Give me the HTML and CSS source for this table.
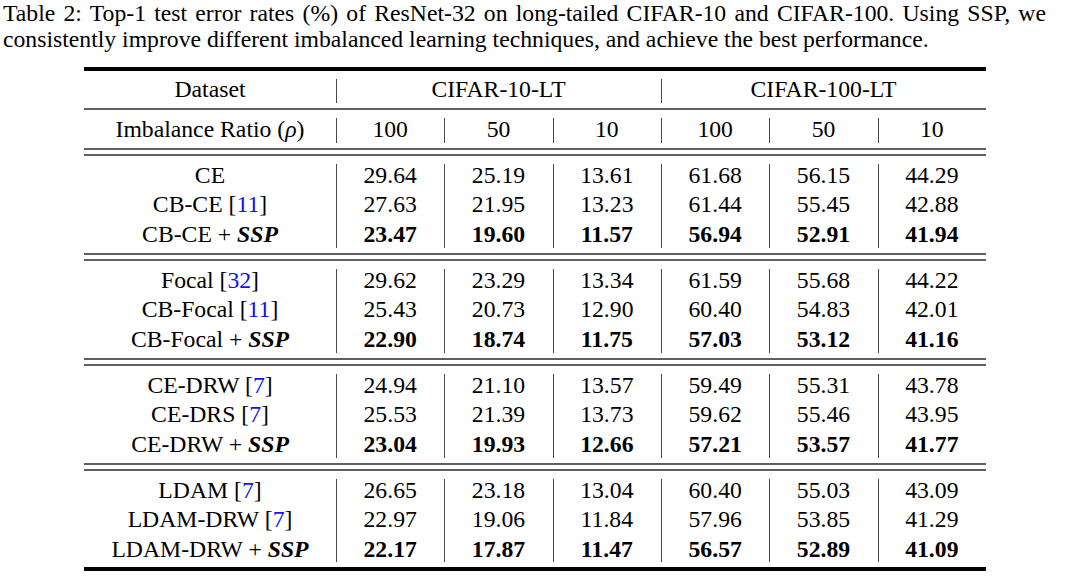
FILE: index.html
```html
<!DOCTYPE html>
<html>
<head>
<meta charset="utf-8">
<link rel="stylesheet" href="styles.css">
</head>
<body>
<div class="page">
  <p class="caption">Table 2: Top-1 test error rates (%) of ResNet-32 on long-tailed CIFAR-10 and CIFAR-100. Using SSP, we consistently improve different imbalanced learning techniques, and achieve the best performance.</p>
  <div class="tbl">
    <div class="rule-thick"></div>
    <div class="band head1">
      <div class="cell">Dataset</div>
      <div class="cell sep span3">CIFAR-10-LT</div>
      <div class="cell sep span3">CIFAR-100-LT</div>
    </div>
    <div class="rule"></div>
    <div class="band head2">
      <div class="cell">Imbalance Ratio (<i>ρ</i>)</div>
      <div class="cell sep">100</div>
      <div class="cell sep">50</div>
      <div class="cell sep">10</div>
      <div class="cell sep">100</div>
      <div class="cell sep">50</div>
      <div class="cell sep">10</div>
    </div>
    <div class="rule-double"></div>

    <div class="band group">
      <div class="col"><span>CE</span><span>CB-CE [<span class="cite">11</span>]</span><span>CB-CE + <b><i>SSP</i></b></span></div>
      <div class="col sep"><span>29.64</span><span>27.63</span><b>23.47</b></div>
      <div class="col sep"><span>25.19</span><span>21.95</span><b>19.60</b></div>
      <div class="col sep"><span>13.61</span><span>13.23</span><b>11.57</b></div>
      <div class="col sep"><span>61.68</span><span>61.44</span><b>56.94</b></div>
      <div class="col sep"><span>56.15</span><span>55.45</span><b>52.91</b></div>
      <div class="col sep"><span>44.29</span><span>42.88</span><b>41.94</b></div>
    </div>
    <div class="rule-double"></div>

    <div class="band group">
      <div class="col"><span>Focal [<span class="cite">32</span>]</span><span>CB-Focal [<span class="cite">11</span>]</span><span>CB-Focal + <b><i>SSP</i></b></span></div>
      <div class="col sep"><span>29.62</span><span>25.43</span><b>22.90</b></div>
      <div class="col sep"><span>23.29</span><span>20.73</span><b>18.74</b></div>
      <div class="col sep"><span>13.34</span><span>12.90</span><b>11.75</b></div>
      <div class="col sep"><span>61.59</span><span>60.40</span><b>57.03</b></div>
      <div class="col sep"><span>55.68</span><span>54.83</span><b>53.12</b></div>
      <div class="col sep"><span>44.22</span><span>42.01</span><b>41.16</b></div>
    </div>
    <div class="rule-double"></div>

    <div class="band group">
      <div class="col"><span>CE-DRW [<span class="cite">7</span>]</span><span>CE-DRS [<span class="cite">7</span>]</span><span>CE-DRW + <b><i>SSP</i></b></span></div>
      <div class="col sep"><span>24.94</span><span>25.53</span><b>23.04</b></div>
      <div class="col sep"><span>21.10</span><span>21.39</span><b>19.93</b></div>
      <div class="col sep"><span>13.57</span><span>13.73</span><b>12.66</b></div>
      <div class="col sep"><span>59.49</span><span>59.62</span><b>57.21</b></div>
      <div class="col sep"><span>55.31</span><span>55.46</span><b>53.57</b></div>
      <div class="col sep"><span>43.78</span><span>43.95</span><b>41.77</b></div>
    </div>
    <div class="rule-double"></div>

    <div class="band group last">
      <div class="col"><span>LDAM [<span class="cite">7</span>]</span><span>LDAM-DRW [<span class="cite">7</span>]</span><span>LDAM-DRW + <b><i>SSP</i></b></span></div>
      <div class="col sep"><span>26.65</span><span>22.97</span><b>22.17</b></div>
      <div class="col sep"><span>23.18</span><span>19.06</span><b>17.87</b></div>
      <div class="col sep"><span>13.04</span><span>11.84</span><b>11.47</b></div>
      <div class="col sep"><span>60.40</span><span>57.96</span><b>56.57</b></div>
      <div class="col sep"><span>55.03</span><span>53.85</span><b>52.89</b></div>
      <div class="col sep"><span>43.09</span><span>41.29</span><b>41.09</b></div>
    </div>
    <div class="rule-thick"></div>
  </div>
</div>
</body>
</html>
```

FILE: styles.css
```css
html, body {
  margin: 0;
  padding: 0;
  background: #ffffff;
}

body {
  font-family: "Liberation Serif", "Times New Roman", serif;
  color: #000000;
  width: 1080px;
  height: 576px;
  overflow: hidden;
}

.caption {
  margin: 0 0 0 3px;
  width: 1043px;
  font-size: 23.7px;
  line-height: 26px;
  text-align: justify;
  text-align-last: left;
}

.tbl {
  margin: 15px 0 0 84px;
  width: 902px;
  font-size: 23.7px;
}

.rule-thick {
  height: 4px;
  background: #000000;
}

.rule {
  height: 2px;
  background: #606060;
}

.rule-double {
  height: 4px;
  border-top: 2px solid #606060;
  border-bottom: 2px solid #606060;
}

.band {
  display: grid;
  grid-template-columns: 252px repeat(6, 1fr);
}

.head1 {
  height: 37px;
}

.head2 {
  height: 38px;
}

.cell {
  display: flex;
  align-items: center;
  justify-content: center;
  white-space: nowrap;
}

.span3 {
  grid-column: span 3;
}

.sep {
  background-image: linear-gradient(#4a4a4a, #4a4a4a);
  background-repeat: no-repeat;
  background-position: 0 8px;
  background-size: 1px calc(100% - 13px);
}

.group {
  height: 97px;
}

.group.last {
  height: 96px;
}

.col {
  display: flex;
  flex-direction: column;
  align-items: center;
  padding-top: 4.5px;
  line-height: 29.5px;
  white-space: nowrap;
}

.cite {
  color: #1010f0;
}
```
